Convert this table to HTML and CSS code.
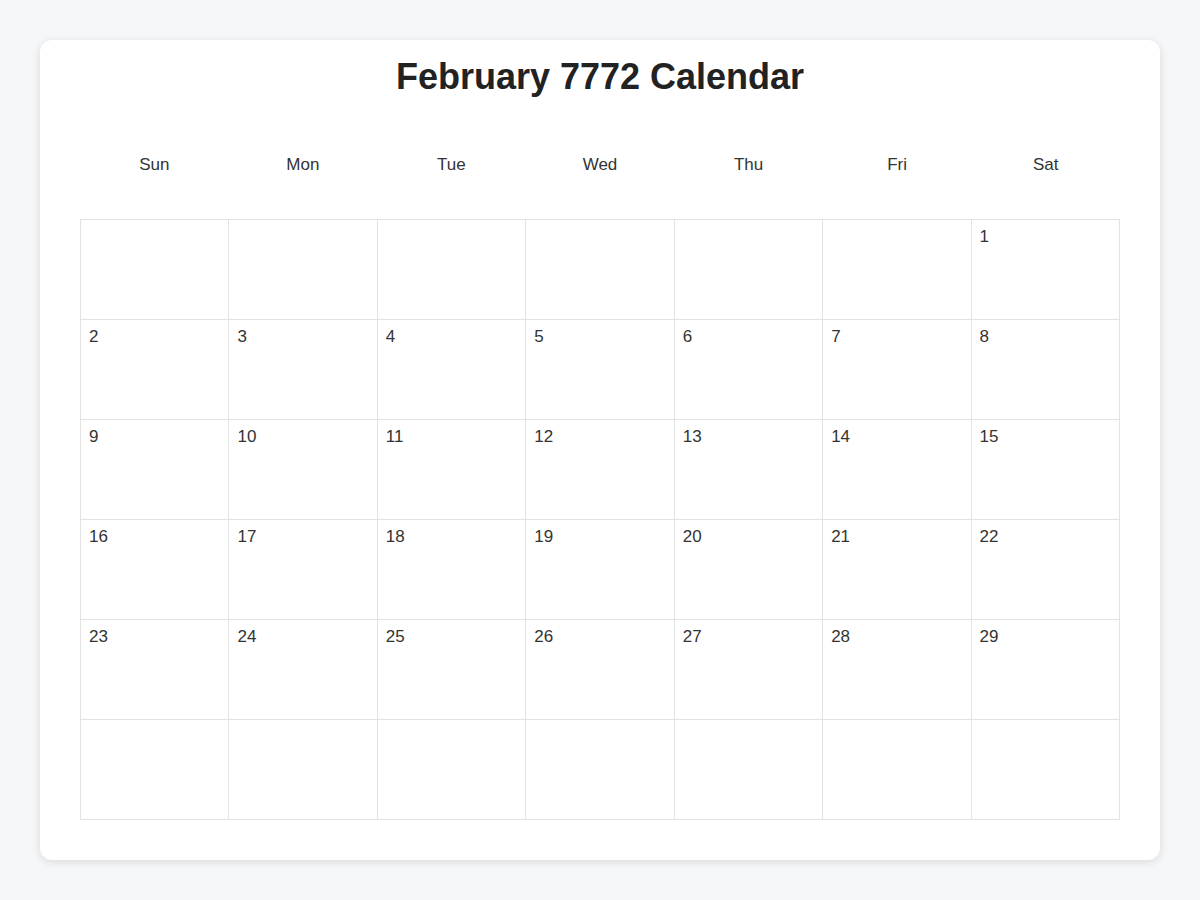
FILE: index.html
```html
<!DOCTYPE html>
<html lang="en">
<head>
<meta charset="utf-8">
<title>February 7772 Calendar</title>
<link rel="stylesheet" href="styles.css">
</head>
<body>
<div class="card">
  <h1 class="title">February 7772 Calendar</h1>
  <div class="weekdays">
    <div class="weekday">Sun</div>
    <div class="weekday">Mon</div>
    <div class="weekday">Tue</div>
    <div class="weekday">Wed</div>
    <div class="weekday">Thu</div>
    <div class="weekday">Fri</div>
    <div class="weekday">Sat</div>
  </div>
  <div class="grid">
    <div class="cell"></div><div class="cell"></div><div class="cell"></div><div class="cell"></div><div class="cell"></div><div class="cell"></div><div class="cell">1</div>
    <div class="cell">2</div><div class="cell">3</div><div class="cell">4</div><div class="cell">5</div><div class="cell">6</div><div class="cell">7</div><div class="cell">8</div>
    <div class="cell">9</div><div class="cell">10</div><div class="cell">11</div><div class="cell">12</div><div class="cell">13</div><div class="cell">14</div><div class="cell">15</div>
    <div class="cell">16</div><div class="cell">17</div><div class="cell">18</div><div class="cell">19</div><div class="cell">20</div><div class="cell">21</div><div class="cell">22</div>
    <div class="cell">23</div><div class="cell">24</div><div class="cell">25</div><div class="cell">26</div><div class="cell">27</div><div class="cell">28</div><div class="cell">29</div>
    <div class="cell"></div><div class="cell"></div><div class="cell"></div><div class="cell"></div><div class="cell"></div><div class="cell"></div><div class="cell"></div>
  </div>
</div>
</body>
</html>
```
FILE: styles.css
```css
html, body {
  margin: 0;
  padding: 0;
}
body {
  background: #f6f7f9;
  font-family: "Liberation Sans", Arial, sans-serif;
  color: #333;
  padding: 40px;
}
.card {
  background: #fff;
  border-radius: 12px;
  box-shadow: 0 2px 10px rgba(0, 0, 0, 0.12);
  padding: 16px 40px 40px;
}
.title {
  margin: 0;
  font-size: 36px;
  font-weight: bold;
  color: #222;
  text-align: center;
}
.weekdays {
  display: grid;
  grid-template-columns: repeat(7, 1fr);
  margin-top: 57px;
  margin-bottom: 44px;
}
.weekday {
  text-align: center;
  font-size: 17px;
  color: #333;
}
.grid {
  display: grid;
  grid-template-columns: repeat(7, 1fr);
  grid-auto-rows: 100px;
  border-top: 1px solid #e3e3e3;
  border-left: 1px solid #e3e3e3;
}
.cell {
  border-right: 1px solid #e3e3e3;
  border-bottom: 1px solid #e3e3e3;
  padding: 7px 8px;
  font-size: 17px;
  color: #333;
}
```
